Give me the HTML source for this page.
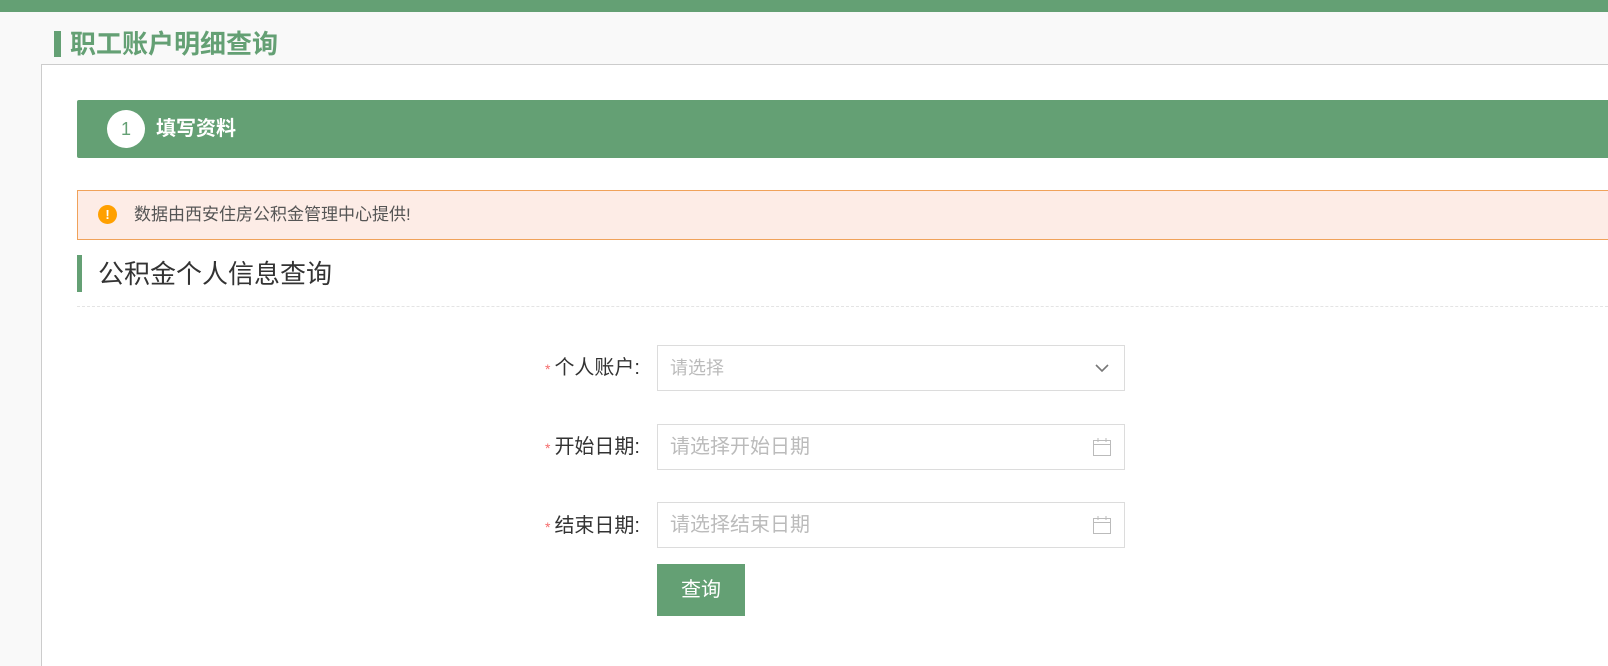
<!DOCTYPE html>
<html><head><meta charset="utf-8"><style>
*{margin:0;padding:0;box-sizing:border-box}
html{width:1608px;height:666px;overflow:hidden}
body{width:1608px;height:666px;overflow:hidden;background:#f9f9f9;font-family:"Liberation Sans","Noto Sans CJK SC",sans-serif;position:relative}
.top{position:absolute;left:0;top:0;width:1608px;height:12px;background:#64a074}
.tbar{position:absolute;left:54px;top:31px;width:7px;height:26px;background:#64a074}
.title{position:absolute;left:70px;top:26px;font-size:26px;font-weight:bold;color:#64a074;line-height:36px}
.card{position:absolute;left:41px;top:64px;width:1567px;height:602px;background:#fff;border:1px solid #ccc;border-bottom:none;border-right:none}
.step{position:absolute;left:77px;top:100px;width:1531px;height:58px;background:#64a074;border-radius:2px 0 0 2px}
.circ{position:absolute;left:107px;top:110px;width:38px;height:38px;border-radius:50%;background:#fff;color:#64a074;font-size:18px;text-align:center;line-height:38px}
.stxt{position:absolute;left:156px;top:116px;color:#fff;font-size:20px;font-weight:bold;line-height:26px}
.alert{position:absolute;left:77px;top:190px;width:1531px;height:50px;background:#fdece6;border:1px solid #f0a25a;border-right:none}
.ic{position:absolute;left:98px;top:205px;width:19px;height:19px;border-radius:50%;background:#ffa000;color:#fff;font-size:13px;font-weight:bold;text-align:center;line-height:19px}
.atxt{position:absolute;left:134px;top:204px;font-size:17px;color:#555;line-height:22px}
.sbar{position:absolute;left:77px;top:255px;width:5px;height:37px;background:#64a074}
.stitle{position:absolute;left:98px;top:256px;font-size:26px;color:#333;line-height:36px}
.dash{position:absolute;left:77px;top:306px;width:1531px;border-top:1px dashed #e4e4e4}
.lab{position:absolute;right:968px;font-size:20px;color:#333;line-height:26px;white-space:nowrap}
.lab i{color:#f56c6c;font-style:normal;font-size:14px;margin-right:4px}
.inp{position:absolute;left:657px;width:468px;height:46px;border:1px solid #dcdcdc;background:#fff;font-size:20px;color:#bbb;padding-left:12px;line-height:44px}
.btn{position:absolute;left:657px;top:564px;width:88px;height:52px;background:#64a074;color:#fff;font-size:20px;text-align:center;line-height:52px}
svg{position:absolute}
</style></head><body>
<div class="top"></div>
<div class="tbar"></div><div class="title">职工账户明细查询</div>
<div class="card"></div>
<div class="step"></div><div class="circ">1</div><div class="stxt">填写资料</div>
<div class="alert"></div><div class="ic">!</div><div class="atxt">数据由西安住房公积金管理中心提供!</div>
<div class="sbar"></div><div class="stitle">公积金个人信息查询</div>
<div class="dash"></div>
<div class="lab" style="top:355px"><i>*</i>个人账户:</div>
<div class="inp" style="top:345px;font-size:18px">请选择</div>
<svg style="left:1094px;top:362px" width="16" height="12" viewBox="0 0 16 12"><path d="M2 3l6 6 6-6" fill="none" stroke="#777" stroke-width="1.6"/></svg>
<div class="lab" style="top:434px"><i>*</i>开始日期:</div>
<div class="inp" style="top:424px">请选择开始日期</div>
<svg style="left:1092px;top:437px" width="20" height="20" viewBox="0 0 20 20"><rect x="1.5" y="3.5" width="17" height="15" fill="none" stroke="#bbb"/><path d="M1.5 7.5h17M6 1v4M14 1v4" stroke="#bbb" fill="none"/></svg>
<div class="lab" style="top:513px"><i>*</i>结束日期:</div>
<div class="inp" style="top:502px">请选择结束日期</div>
<svg style="left:1092px;top:515px" width="20" height="20" viewBox="0 0 20 20"><rect x="1.5" y="3.5" width="17" height="15" fill="none" stroke="#bbb"/><path d="M1.5 7.5h17M6 1v4M14 1v4" stroke="#bbb" fill="none"/></svg>
<div class="btn">查询</div>
</body></html>
